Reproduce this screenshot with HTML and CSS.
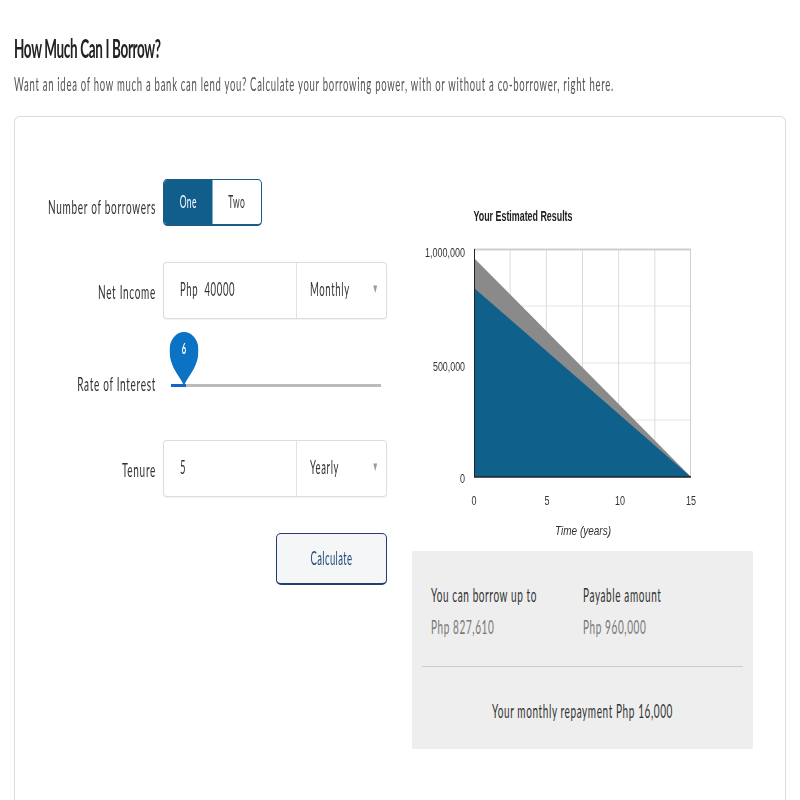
FILE: index.html
```html
<!DOCTYPE html>
<html>
  <head>
    <title>How Much Can I Borrow?</title>
    <link rel="stylesheet" href="styles.css">
  </head>
  <body>
    <div class="page">
      <h1 class="title">How Much Can I Borrow?</h1>
      <p class="intro">Want an idea of how much a bank can lend you? Calculate your borrowing power, with or without a co-borrower, right here.</p>

      <div class="card">
        <form class="calc">
          <div class="row row-borrowers">
            <label class="row-label">Number of borrowers</label>
            <div class="toggle">
              <span class="toggle-opt active">One</span>
              <span class="toggle-opt">Two</span>
            </div>
          </div>

          <div class="row row-gap">
            <label class="row-label">Net Income</label>
            <div class="field">
              <div class="field-value">Php&nbsp; 40000</div>
              <div class="field-select">Monthly <span class="caret">&#9660;</span></div>
            </div>
          </div>

          <div class="row row-slider">
            <label class="row-label">Rate of Interest</label>
            <div class="slider">
              <div class="slider-track"><div class="slider-fill"></div></div>
              <div class="slider-pin">
                <svg width="58" height="54" viewBox="0 0 58 54">
                  <path d="M29 54 C22 44 0 36 0 18 A29 18 0 0 1 58 18 C58 36 36 44 29 54 Z" fill="#0b72c4"/>
                </svg>
                <span class="pin-value">6</span>
              </div>
            </div>
          </div>

          <div class="row row-tenure">
            <label class="row-label">Tenure</label>
            <div class="field">
              <div class="field-value">5</div>
              <div class="field-select">Yearly <span class="caret">&#9660;</span></div>
            </div>
          </div>

          <div class="row row-action">
            <button type="button" class="calc-btn">Calculate</button>
          </div>
        </form>

        <div class="results">
          <svg class="chart" width="682" height="372" viewBox="0 0 682 372">
            <text class="chart-title" x="222" y="42" text-anchor="middle" textLength="198" lengthAdjust="spacingAndGlyphs">Your Estimated Results</text>

            <!-- grid -->
            <g stroke="#dcdcdc">
              <line x1="196.3" y1="70" x2="196.3" y2="298" stroke-width="2"/>
              <line x1="268.7" y1="70" x2="268.7" y2="298" stroke-width="2"/>
              <line x1="341" y1="70" x2="341" y2="298" stroke-width="2"/>
              <line x1="413.3" y1="70" x2="413.3" y2="298" stroke-width="2"/>
              <line x1="485.7" y1="70" x2="485.7" y2="298" stroke-width="2"/>
              <line x1="124" y1="127" x2="558" y2="127"/>
              <line x1="124" y1="184" x2="558" y2="184"/>
              <line x1="124" y1="241" x2="558" y2="241"/>
            </g>
            <line x1="124" y1="70.5" x2="558" y2="70.5" stroke="#cfcfcf" stroke-width="2"/>
            <line x1="557" y1="70" x2="557" y2="298" stroke="#cfcfcf" stroke-width="2"/>

            <!-- areas -->
            <polygon points="124,79 558,298 124,298" fill="#8a8a8a"/>
            <polygon points="124,109 558,298 124,298" fill="#10608c"/>

            <!-- axes -->
            <line x1="125" y1="70" x2="125" y2="298" stroke="#222" stroke-width="2"/>
            <line x1="124" y1="298" x2="558" y2="298" stroke="#222" stroke-width="1.5"/>

            <g class="chart-label">
              <text x="106" y="78" text-anchor="end" textLength="80" lengthAdjust="spacingAndGlyphs">1,000,000</text>
              <text x="106" y="192" text-anchor="end" textLength="64" lengthAdjust="spacingAndGlyphs">500,000</text>
              <text x="106" y="304" text-anchor="end" textLength="10" lengthAdjust="spacingAndGlyphs">0</text>
              <text x="124" y="326" text-anchor="middle" textLength="10" lengthAdjust="spacingAndGlyphs">0</text>
              <text x="270" y="326" text-anchor="middle" textLength="10" lengthAdjust="spacingAndGlyphs">5</text>
              <text x="416" y="326" text-anchor="middle" textLength="20" lengthAdjust="spacingAndGlyphs">10</text>
              <text x="558" y="326" text-anchor="middle" textLength="20" lengthAdjust="spacingAndGlyphs">15</text>
              <text class="axis-title" x="342" y="356" text-anchor="middle" textLength="112" lengthAdjust="spacingAndGlyphs">Time (years)</text>
            </g>
          </svg>

          <div class="summary">
            <div class="summary-grid">
              <div class="summary-label">You can borrow up to</div>
              <div class="summary-label">Payable amount</div>
              <div class="summary-value">Php 827,610</div>
              <div class="summary-value">Php 960,000</div>
            </div>
            <div class="summary-divider"></div>
            <div class="summary-total">Your monthly repayment Php 16,000</div>
          </div>
        </div>
      </div>
    </div>
  </body>
</html>
```

FILE: styles.css
```css
html,
body {
  margin: 0;
  overflow: hidden;
  background: #fff;
}
body {
  font-family: Lato, "Noto Sans", sans-serif;
  color: #333;
}
/* the whole page is drawn at double width, then squeezed */
.page {
  width: 1600px;
  height: 800px;
  overflow: hidden;
  transform: scaleX(0.5);
  transform-origin: 0 0;
}
.title {
  margin: 0;
  padding: 31px 0 0 28px;
  font-size: 27px;
  line-height: 34px;
  letter-spacing: -0.7px;
  font-weight: 700;
  color: #222;
}
.intro {
  margin: 8px 0 0 28px;
  font-size: 19px;
  line-height: 22px;
  letter-spacing: 1.45px;
  color: #555;
}
.card {
  margin: 21px 28px 0;
  height: 700px;
  padding-top: 62px;
  border: 1px solid #dcdcdc;
  border-width: 1px 2px;
  border-radius: 12px / 6px;
  box-shadow: 0 1px 2px rgba(0, 0, 0, 0.06);
  display: grid;
  grid-template-columns: 744px 682px;
  column-gap: 50px;
  align-items: start;
}
.row {
  display: flex;
  align-items: center;
}
.row-label {
  width: 282px;
  margin-right: 14px;
  text-align: right;
  font-size: 20px;
  line-height: 22px;
  letter-spacing: 1.4px;
  color: #333;
}
.row-borrowers .row-label {
  padding-top: 6px;
}
.toggle {
  display: flex;
  width: 198px;
  height: 47px;
  box-sizing: border-box;
  border: 1px solid #1b5b87;
  border-width: 1px 2px 2px;
  border-radius: 8px / 5px;
  overflow: hidden;
}
.toggle-opt {
  flex: 1;
  display: flex;
  align-items: center;
  justify-content: center;
  padding-bottom: 1px;
  font-size: 17px;
  letter-spacing: 0.8px;
  color: #333;
}
.toggle-opt.active {
  background-color: #115e8c;
  color: #fff;
}
.row-gap {
  margin-top: 36px;
}
.field {
  display: flex;
  width: 448px;
  height: 57px;
  box-sizing: border-box;
  border: 1px solid #dddddd;
  border-width: 1px 2px;
  border-radius: 8px / 4px;
  box-shadow: 0 1px 2px rgba(0, 0, 0, 0.06);
  font-size: 19px;
  letter-spacing: 1.3px;
  color: #333;
}
.field-value {
  width: 266px;
  padding-left: 32px;
  box-sizing: border-box;
  border-right: 2px solid #e3e3e3;
  display: flex;
  align-items: center;
  padding-bottom: 5px;
}
.field-select {
  flex: 1;
  display: flex;
  align-items: center;
  justify-content: space-between;
  padding: 0 14px 5px 26px;
}
.caret {
  font-size: 13px;
  color: #9a9a9a;
}
.row-slider {
  margin-top: 13px;
  height: 62px;
  align-items: flex-end;
}
.slider {
  position: relative;
  align-self: stretch;
  width: 420px;
  margin-left: 16px;
  padding-top: 52px;
  box-sizing: border-box;
}
.slider-track {
  height: 3px;
  background-color: #bbbbbb;
}
.slider-fill {
  width: 30px;
  height: 3px;
  background-color: #1565c0;
}
.slider-pin {
  position: absolute;
  left: -3px;
  top: 0;
  width: 58px;
  height: 54px;
}
.slider-pin svg {
  display: block;
}
.pin-value {
  position: absolute;
  left: 0;
  right: 0;
  top: 7px;
  text-align: center;
  font-size: 15px;
  font-weight: 700;
  color: #fff;
}
.row-tenure {
  margin-top: 46px;
}
.row-action {
  margin-top: 36px;
  justify-content: flex-end;
}
.calc-btn {
  width: 222px;
  height: 52px;
  border: 1px solid #22406f;
  border-width: 1px 2px 2px;
  border-radius: 10px / 5px;
  background-color: #f5f6f8;
  font-family: Lato, "Noto Sans", sans-serif;
  font-size: 19px;
  letter-spacing: 0.8px;
  color: #264a7a;
  padding: 0 0 2px;
}
.results {
  display: flex;
  flex-direction: column;
}
.chart {
  display: block;
}
.chart-title {
  font-family: "Liberation Sans", Arial, sans-serif;
  font-size: 14px;
  font-weight: 700;
  fill: #222;
}
.chart-label text {
  font-family: "Liberation Sans", Arial, sans-serif;
  font-size: 12px;
  fill: #333;
}
.chart-label .axis-title {
  font-style: italic;
}
.summary {
  height: 198px;
  box-sizing: border-box;
  padding: 27px 20px 0;
  background-color: #eeeeee;
}
.summary-grid {
  display: grid;
  grid-template-columns: 304px 1fr;
  padding-left: 18px;
  font-size: 20px;
  line-height: 32px;
  letter-spacing: 1.2px;
}
.summary-label {
  color: #333;
}
.summary-value {
  color: #777;
}
.summary-divider {
  height: 1px;
  margin: 24px 0 27px;
  background-color: #cccccc;
}
.summary-total {
  text-align: center;
  font-size: 20px;
  line-height: 32px;
  letter-spacing: 1.2px;
  color: #333;
}
```
